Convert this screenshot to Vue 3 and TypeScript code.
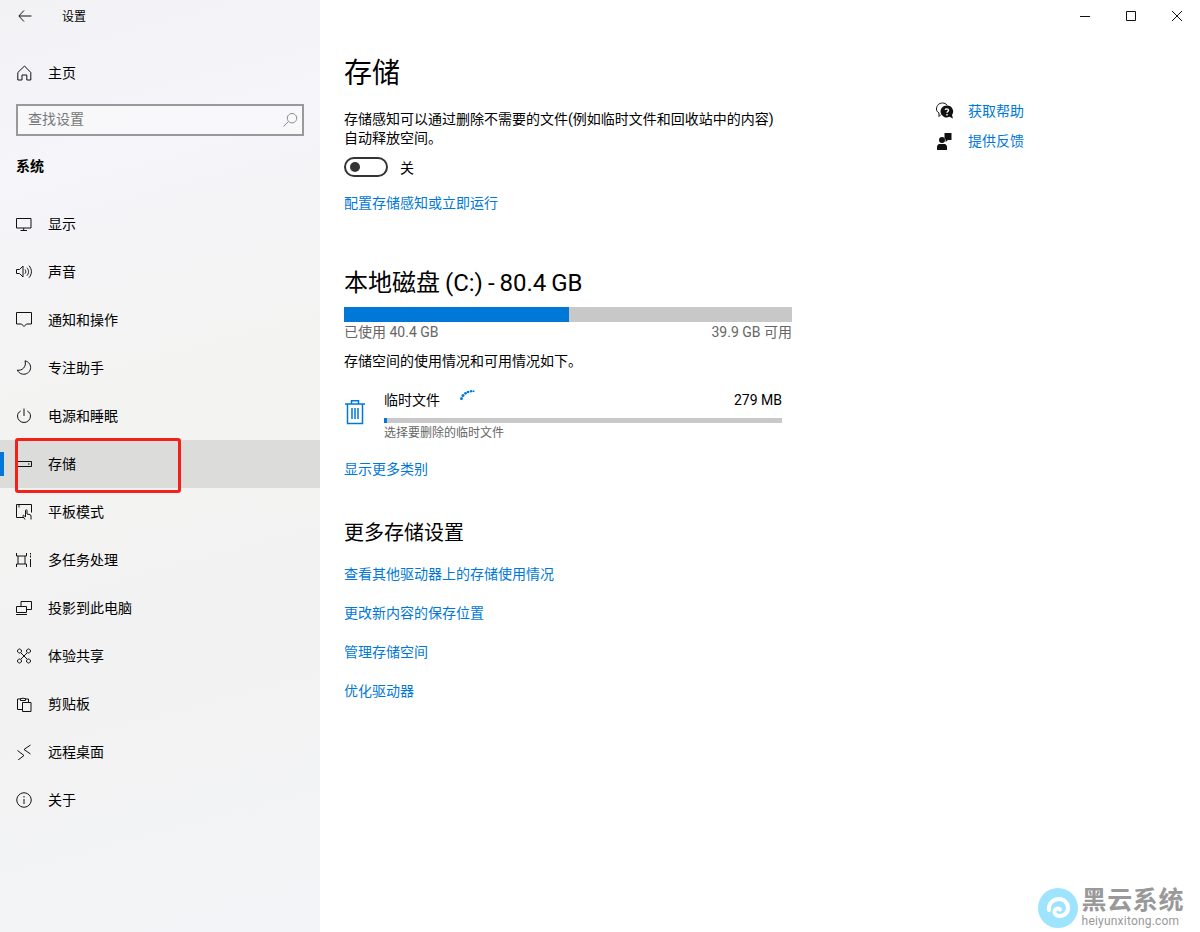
<script setup lang="ts">
interface NavItem {
  label: string
  d: string
  active?: boolean
}

const nav: NavItem[] = [
  { label: '显示', d: 'M.5 2.500h14.500v9.500H.5z M7.700 12v2.500 M4.500 14.500h6.500' },
  { label: '声音', d: 'M.5 5.500h3l3.500-3.500v11L3.500 9.500h-3z M9 5.500c1 1.300 1 3 0 4.200 M11 3.700c2 2.500 2 5.500 0 8 M13 1.700c3.200 3.500 3.200 8.500 0 12' },
  { label: '通知和操作', d: 'M.5 .5h15v11.500h-5L8 14.500 5.500 12h-5z' },
  { label: '专注助手', d: 'M9 .8c4 1 6.200 4.300 5.500 8-.8 3.800-4.500 6-8.200 5.300-2.300-.5-4.200-2-5-4 4.300 1.200 9.700-3.300 7.700-9.300z' },
  { label: '电源和睡眠', d: 'M8 .5v7.500 M4.700 3C2.500 4.200 1.500 6 1.500 8a6.500 6.500 0 0 0 13 0c0-2-1-3.800-3.200-5' },
  { label: '存储', d: 'M1.500 5.500h14v5h-14 M12 8h1.500', active: true },
  { label: '平板模式', d: 'M8 13.500H.5V.5h15v8 M3 .5v3 M9 15.500l-2-3c-.6-1 .5-1.700 1.200-.9l1.300 1.400V6.500c0-1 1.500-1 1.500 0v3.500l3 .7c.7.2 1 .6 1 1.300v3.500' },
  { label: '多任务处理', d: 'M.5 1v3h10V1 M.5 15v-3h10v3 M2 4v8 M9 4v8 M14.500 1v1.500 M14.500 3.500v2 M14.500 7v8' },
  { label: '投影到此电脑', d: 'M5 6V1.500h10.500v8H11 M.5 6.500h10v6H.5z M0 14.500h11' },
  { label: '体验共享', d: 'M5 5l6 6 M11 5l-6 6 M3.500 1a2 2 0 1 0 .01 0z M12.500 1a2 2 0 1 0 .01 0z M3.500 11a2 2 0 1 0 .01 0z M12.500 11a2 2 0 1 0 .01 0z' },
  { label: '剪贴板', d: 'M1.500 13.500V3h3 M9.500 3h3v3 M4.500 4.500V2.500h1.500a1.500 1.500 0 0 1 2 0h1.500v2z M6.500 6.500h8.500v9H6.500z M1.500 13.500h5' },
  { label: '远程桌面', d: 'M1.500 6.500l6.500 5-6.500 5 M14.500 1L8 5.500l6.500 4.500' },
  { label: '关于', d: 'M8 .8a7.200 7.200 0 1 0 .01 0z M8 7v5 M8 4v1.500' }
]

const moreLinks: string[] = [
  '查看其他驱动器上的存储使用情况',
  '更改新内容的保存位置',
  '管理存储空间',
  '优化驱动器'
]
</script>

<template>
  <div class="window">
    <aside class="sidebar">
      <div class="title-row">
        <svg class="back" width="14" height="12" viewBox="0 0 14 12"><path d="M6 .5L.8 6 6 11.500 M1 6h12.500" /></svg>
        <span class="app-name">设置</span>
      </div>
      <div class="home-row">
        <svg class="ico" width="16" height="16" viewBox="0 0 16 16"><path d="M1.800 15V7.500L8.500 1l6.300 6.500V15h-4v-5H6v5z" /></svg>
        <span class="raise">主页</span>
      </div>
      <div class="search">
        <span class="search-text">查找设置</span>
        <svg class="ico" width="16" height="16" viewBox="0 0 16 16"><path d="M10 1.500a4.700 4.700 0 1 0 .01 0z M6.500 9.500L1.500 14.500" /></svg>
      </div>
      <div class="section">系统</div>
      <nav class="nav">
        <div v-for="item in nav" :key="item.label" class="nav-item" :class="{ active: item.active }">
          <svg class="ico" width="16" height="16" viewBox="0 0 16 16"><path :d="item.d" /></svg>
          <span class="raise">{{ item.label }}</span>
        </div>
      </nav>
      <div class="red-box"></div>
    </aside>

    <main class="main">
      <div class="controls">
        <span class="ctrl"><svg width="10" height="10" viewBox="0 0 10 10"><path d="M0 5.500h10" /></svg></span>
        <span class="ctrl"><svg width="10" height="10" viewBox="0 0 10 10"><path d="M.5 .5h9v9h-9z" /></svg></span>
        <span class="ctrl"><svg width="10" height="10" viewBox="0 0 10 10"><path d="M0 0l10 10 M10 0L0 10" /></svg></span>
      </div>

      <div class="columns">
        <section class="content">
          <h1>存储</h1>
          <p class="desc">存储感知可以通过删除不需要的文件(例如临时文件和回收站中的内容)<br />自动释放空间。</p>
          <div class="toggle-row">
            <span class="toggle"><i></i></span>
            <span>关</span>
          </div>
          <a class="link config">配置存储感知或立即运行</a>

          <h2>本地磁盘 (C:) - 80.4 GB</h2>
          <div class="usage"><div class="usage-fill"></div></div>
          <div class="usage-labels"><span>已使用 40.4 GB</span><span>39.9 GB 可用</span></div>
          <p class="usage-note">存储空间的使用情况和可用情况如下。</p>

          <div class="category">
            <svg class="trash" width="22" height="26" viewBox="0 0 22 26">
              <path d="M1 5h20 M7.500 5V1.800h7V5 M3.500 5v19.500h15V5 M8 9v11 M11 9v11 M14 9v11" />
            </svg>
            <div class="cat-body">
              <div class="cat-head">
                <span class="cat-name">临时文件</span>
                <svg class="spinner" width="16" height="12" viewBox="0 0 16 12">
                  <circle cx="2.500" cy="9.500" r="1.500" />
                  <circle cx="4" cy="6.500" r="1.500" />
                  <circle cx="6.500" cy="4.300" r="1.400" />
                  <circle cx="9" cy="3" r="1.300" />
                  <circle cx="12" cy="2.200" r="1.200" />
                  <circle cx="14.500" cy="2.200" r="1" />
                </svg>
                <span class="cat-size">279 MB</span>
              </div>
              <div class="cat-bar"><div class="cat-fill"></div></div>
              <div class="cat-sub">选择要删除的临时文件</div>
            </div>
          </div>
          <a class="link more-cats">显示更多类别</a>

          <h3>更多存储设置</h3>
          <div class="more-links">
            <a v-for="text in moreLinks" :key="text" class="link">{{ text }}</a>
          </div>
        </section>

        <section class="help">
          <div class="help-row">
            <svg width="18" height="18" viewBox="0 0 18 18">
              <path class="thin" d="M5 12.500l-2 2v-3.500C1.200 10 .5 8.500.5 7 .5 3.500 3 1 6.500 1c2 0 3.500.8 4.500 2" />
              <path class="solid" d="M11 3.500a6 6 0 0 1 5 9.500l1 3.500-3.500-1.800A6 6 0 1 1 11 3.500z" />
              <path class="q" d="M9.200 7.800c.3-1.200 3.300-1.400 3.300.4 0 1.300-1.500 1.300-1.500 2.600 M11 12v1.400" />
            </svg>
            <a class="link">获取帮助</a>
          </div>
          <div class="help-row">
            <svg width="18" height="18" viewBox="0 0 18 18">
              <path class="solid" d="M6 5a3 3 0 1 1 0 6 3 3 0 0 1 0-6z M1 18v-3c0-1.500 1-3 2.500-3h5c1.500 0 2.500 1.500 2.500 3v3z M8.500 1H15.500v7H12l-2.500 2V7.500c-.5-.8-1-1.500-1-2.500z" />
            </svg>
            <a class="link">提供反馈</a>
          </div>
        </section>
      </div>

      <div class="watermark">
        <svg width="40" height="40" viewBox="0 0 40 40">
          <circle cx="20" cy="20" r="20" fill="#9fe4ff" />
          <path class="swirl" d="M11 22c-1-6 4-11 10-11 5 0 9 4 9 9 0 5-4 8-8.500 8-3.500 0-5.500-2.500-5-5 .5-2.500 4-3.500 5.500-1.500" />
        </svg>
        <div class="wm-text">
          <div class="wm-name">黑云系统</div>
          <div class="wm-url">heiyunxitong.com</div>
        </div>
      </div>
    </main>
  </div>
</template>

<style>
html, body { margin: 0; background: #fff; }
</style>

<style scoped>
.window {
  position: relative;
  width: 1200px;
  height: 932px;
  display: flex;
  overflow: hidden;
  color: #000;
  font-family: Roboto, "Noto Sans CJK SC", sans-serif;
  font-size: 14px;
  background: #fff;
}
.sidebar {
  position: relative;
  flex: none;
  width: 320px;
  box-sizing: border-box;
  background: linear-gradient(165deg, #f2f2f5 0%, #f5f5fa 18%, #f3f3f2 40%, #f2f2f2 70%, #f3f4f7 100%);
}
svg path { fill: none; stroke: #111; stroke-width: 1; }
.title-row {
  height: 32px;
  display: flex;
  align-items: center;
  padding-left: 18px;
}
.app-name { margin-left: 30px; font-size: 12px; padding-bottom: 2px; }
.raise { padding-bottom: 2px; }
.home-row {
  height: 48px;
  margin-top: 17px;
  display: flex;
  align-items: center;
  gap: 16px;
  padding-left: 16px;
}
.ico { flex: none; }
.search {
  height: 32px;
  margin: 7px 16px 0;
  box-sizing: border-box;
  border: 2px solid #999;
  padding: 0 4px 0 10px;
  display: flex;
  align-items: center;
  justify-content: space-between;
  color: #777;
  background: rgba(255, 255, 255, 0.35);
}
.search-text { padding-bottom: 4px; }
.search svg path { stroke: #888; }
.section {
  height: 20px;
  line-height: 20px;
  margin-top: 20px;
  padding-left: 16px;
  font-weight: 700;
  font-size: 14px;
}
.nav { margin-top: 24px; }
.nav-item {
  height: 48px;
  display: flex;
  align-items: center;
  gap: 16px;
  padding-left: 16px;
  position: relative;
}
.nav-item.active { background: #dcdcdb; }
.nav-item.active::before {
  content: "";
  position: absolute;
  left: 0;
  top: 12px;
  width: 4px;
  height: 24px;
  background: #0078d7;
}
.red-box {
  position: absolute;
  left: 15px;
  top: 438px;
  width: 166px;
  height: 55px;
  box-sizing: border-box;
  border: 3px solid #f5201a;
  border-radius: 3px;
}
.main {
  position: relative;
  flex: 1;
  min-width: 0;
}
.controls {
  height: 32px;
  display: flex;
  justify-content: flex-end;
}
.ctrl {
  width: 46px;
  display: flex;
  align-items: center;
  justify-content: center;
}
.columns {
  display: flex;
  padding-left: 24px;
}
.content { width: 448px; flex: none; }
h1, h2, h3, p { margin: 0; font-weight: 400; }
h1 { font-size: 28px; line-height: 40px; margin-top: 22px; }
.desc { font-size: 14px; line-height: 19px; margin-top: 16px; }
.toggle-row {
  display: flex;
  align-items: center;
  gap: 12px;
  height: 20px;
  margin-top: 9px;
}
.toggle {
  width: 44px;
  height: 20px;
  box-sizing: border-box;
  border: 2px solid #333;
  border-radius: 10px;
  display: flex;
  align-items: center;
  padding-left: 4px;
}
.toggle i {
  display: block;
  width: 10px;
  height: 10px;
  border-radius: 50%;
  background: #333;
}
.link { color: #0078d7; font-size: 14px; line-height: 20px; display: block; }
.config { margin-top: 16px; }
h2 { font-size: 24px; line-height: 34px; margin-top: 53px; word-spacing: -1px; }
.usage { height: 15px; background: #c8c8c8; margin-top: 7px; }
.usage-fill { width: 225px; height: 100%; background: #0078d7; }
.usage-labels {
  display: flex;
  justify-content: space-between;
  color: #666;
  line-height: 20px;
}
.usage-note { line-height: 20px; margin-top: 9px; }
.category { display: flex; margin-top: 19px; }
.trash { flex: none; margin-top: 9px; margin-left: 0; }
.trash path { stroke: #0078d7; stroke-width: 1.500; }
.cat-body { width: 398px; margin-left: 18px; }
.cat-head {
  height: 20px;
  line-height: 20px;
  display: flex;
  position: relative;
}
.spinner { position: absolute; left: 75px; top: -1px; fill: #0078d7; }
.cat-size { margin-left: auto; }
.cat-bar { height: 5px; background: #c8c8c8; margin-top: 8px; }
.cat-fill { width: 3px; height: 100%; background: #0078d7; }
.cat-sub { font-size: 12px; line-height: 18px; color: #666; margin-top: 1px; }
.more-cats { margin-top: 17px; }
h3 { font-size: 20px; line-height: 28px; margin-top: 40px; }
.more-links {
  display: flex;
  flex-direction: column;
  gap: 19px;
  margin-top: 17px;
}
.help {
  margin-left: 144px;
  margin-top: 69px;
  display: flex;
  flex-direction: column;
  gap: 10px;
}
.help-row {
  display: flex;
  align-items: center;
  gap: 14px;
  height: 20px;
}
.help svg path.solid { fill: #111; stroke: none; }
.help svg path.thin { stroke: #111; }
.help svg path.q { stroke: #fff; stroke-width: 1.400; }
.watermark {
  position: absolute;
  right: 16px;
  bottom: 4px;
  display: flex;
  align-items: center;
  gap: 4px;
}
.swirl { stroke: #fff; stroke-width: 4; stroke-linecap: round; }
.wm-text { color: #999; display: flex; flex-direction: column; }
.wm-name { font-size: 25px; line-height: 26px; font-weight: 700; letter-spacing: .6px; }
.wm-url { font-size: 12px; line-height: 14px; letter-spacing: .2px; }
</style>
